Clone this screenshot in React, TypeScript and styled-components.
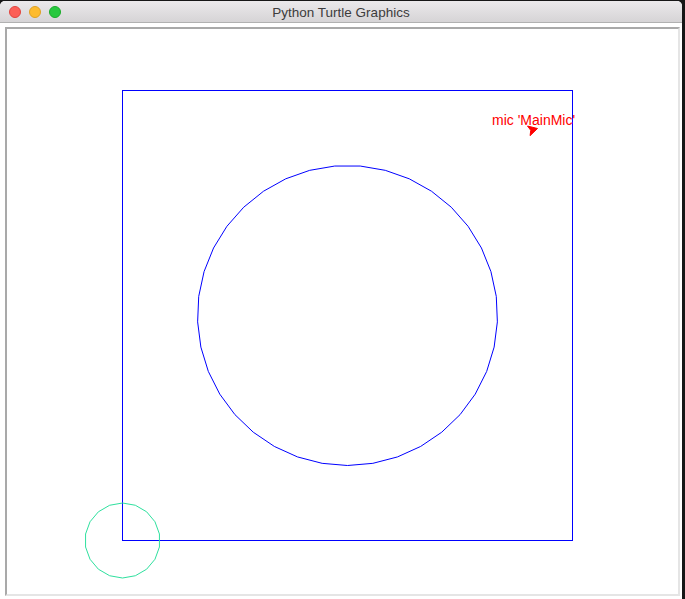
import React from "react";
import styled, { createGlobalStyle } from "styled-components";

const GlobalStyle = createGlobalStyle`
  html, body { margin: 0; padding: 0; background: #161616; }
  body { width: 685px; height: 599px; overflow: hidden; }
  #root { width: 685px; height: 599px; }
`;

const Desktop = styled.div`
  width: 685px;
  height: 599px;
  background: #161616;
  display: flex;
  align-items: flex-start;
`;

const Window = styled.div`
  width: 682px;
  height: 598px;
  margin-top: 1px;
  background: #ffffff;
  border-radius: 5px 5px 0 0;
  overflow: hidden;
  display: flex;
  flex-direction: column;
`;

const TitleBar = styled.div`
  position: relative;
  height: 21px;
  flex: none;
  background: linear-gradient(#ebe9eb, #d6d4d6);
  border-bottom: 1px solid #b1b1b1;
  display: flex;
  align-items: center;
  justify-content: center;
`;

const Lights = styled.div`
  position: absolute;
  left: 9px;
  top: 5px;
  display: flex;
  gap: 8px;
`;

const Light = styled.span<{ $c: string; $b: string }>`
  width: 12px;
  height: 12px;
  border-radius: 50%;
  box-sizing: border-box;
  background: ${(p) => p.$c};
  border: 0.5px solid ${(p) => p.$b};
`;

const Title = styled.div`
  font-family: "Liberation Sans", Arial, sans-serif;
  font-size: 13.5px;
  color: #3c3c3c;
  margin-top: 1px;
`;

const Body = styled.div`
  flex: 1;
  display: flex;
  padding: 4px 2px 3px 5px;
`;

const CanvasFrame = styled.div`
  flex: 1;
  display: flex;
  border-top: 2px solid #a9a9a9;
  border-left: 2px solid #a9a9a9;
  border-right: 2px solid #e5e5e5;
  border-bottom: 2px solid #e5e5e5;
  background: #ffffff;
`;

const Drawing = styled.svg`
  display: block;
  width: 671px;
  height: 564px;
`;

const Label = styled.text`
  font-family: "Liberation Sans", Arial, sans-serif;
  font-size: 14px;
  fill: #ff0000;
`;

function circlePoints(cx: number, cy: number, r: number): string {
  const steps = 1 + Math.floor(Math.min(11 + Math.abs(r) / 6, 59));
  const pts: string[] = [];
  for (let k = 0; k <= steps; k++) {
    const a = ((-90 + (360 / steps) * k) * Math.PI) / 180;
    pts.push(`${(cx + r * Math.cos(a)).toFixed(2)},${(cy + r * Math.sin(a)).toFixed(2)}`);
  }
  return pts.join(" ");
}

function turtleShape(tx: number, ty: number, deg: number): string {
  const t = (deg * Math.PI) / 180;
  const f = [Math.cos(t), Math.sin(t)];
  const l = [-Math.sin(t), Math.cos(t)];
  const pt = (b: number, s: number) =>
    `${(tx + b * f[0] + s * l[0]).toFixed(2)},${(ty + b * f[1] + s * l[1]).toFixed(2)}`;
  return [pt(0, 0), pt(-9, 5), pt(-7, 0), pt(-9, -5)].join(" ");
}

export default function App() {
  return (
    <>
      <GlobalStyle />
      <Desktop>
        <Window>
          <TitleBar>
            <Lights>
              <Light $c="#fc5f57" $b="#e0443e" />
              <Light $c="#fdbb2e" $b="#dea123" />
              <Light $c="#28c83f" $b="#1aab29" />
            </Lights>
            <Title>Python Turtle Graphics</Title>
          </TitleBar>
          <Body>
            <CanvasFrame>
              <Drawing viewBox="0 0 671 564">
                <g transform="translate(340.5 286.5) scale(1 -1)" fill="none" strokeWidth={1}>
                  <rect x={-225} y={-225} width={450} height={450} stroke="#0000ff" />
                  <polyline points={circlePoints(0, 0, 150)} stroke="#0000ff" />
                  <polyline points={circlePoints(-225, -225, 37.5)} stroke="#2ee09e" />
                  <polygon points={turtleShape(190, 187, 15)} fill="#ff0000" stroke="#ff0000" />
                </g>
                <Label x={485} y={96}>mic 'MainMic'</Label>
              </Drawing>
            </CanvasFrame>
          </Body>
        </Window>
      </Desktop>
    </>
  );
}
